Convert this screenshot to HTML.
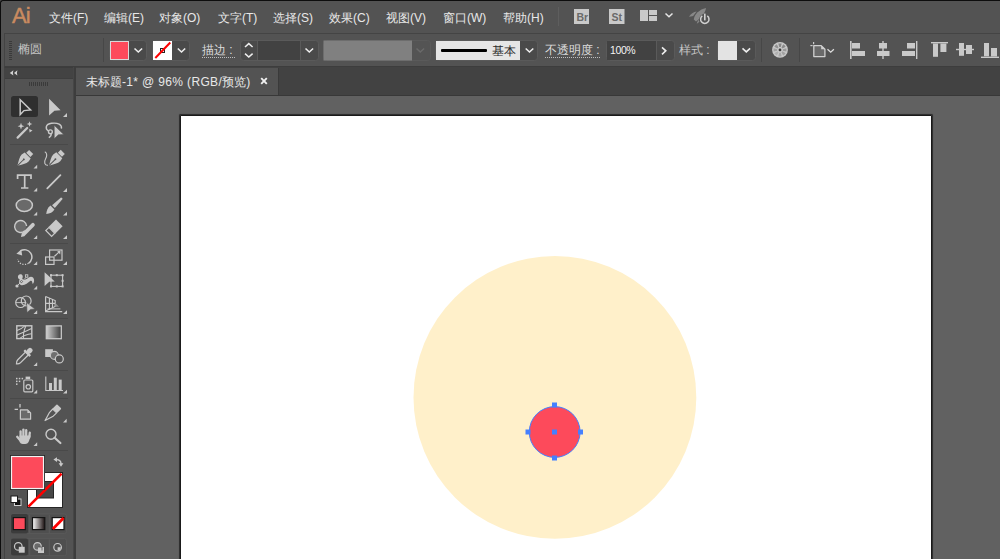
<!DOCTYPE html>
<html><head><meta charset="utf-8">
<style>
*{margin:0;padding:0;box-sizing:border-box}
html,body{width:1000px;height:559px;overflow:hidden;background:#535353;font-family:"Liberation Sans",sans-serif;color:#e6e6e6}
.abs{position:absolute}
#frame{position:absolute;left:0;top:0;width:1000px;height:559px;border-left:1px solid #0d0d0d;border-top:1px solid #0d0d0d;border-top-left-radius:3px}
.menu{position:absolute;top:10px;font-size:12px;line-height:16px;color:#e8e8e8;white-space:nowrap}
#ctrl{position:absolute;left:4px;top:33px;width:996px;height:34px;border-top:1px solid #444;border-left:1px solid #444;border-bottom:1px solid #3d3d3d;background:#535353}
#lpanel{position:absolute;left:4px;top:67px;width:72px;height:492px;border-left:1px solid #434343;border-top:1px solid #3c3c3c;background:#535353}
#lhead{position:absolute;left:0;top:0;width:68px;height:11px;background:#434343;border-bottom:1px solid #3e3e3e}
#ldiv{position:absolute;left:68px;top:-1px;width:3px;height:493px;background:linear-gradient(to right,#464646 1px,#3d3d3d 1px)}
#tabbar{position:absolute;left:76px;top:67px;width:924px;height:29px;background:#424242;border-bottom:1px solid #383838}
#tab{position:absolute;left:0;top:1px;width:203px;height:27px;background:#535353;border-right:1px solid #3a3a3a}
#canvas{position:absolute;left:76px;top:96px;width:924px;height:463px;background:#616161}
#artboard{position:absolute;left:180px;top:115px;width:752px;height:460px;background:#fff;border:1px solid #1a1a1a;border-radius:1px;box-shadow:0 0 0.8px 0.4px rgba(20,20,20,0.7)}
.ctext{position:absolute;font-size:12px;line-height:14px;color:#e0e0e0;white-space:nowrap}
.dd{position:absolute;background:#474747;border-radius:3px}
.sep{position:absolute;width:1px;background:#464646}
</style></head><body>
<div id="frame"></div>
<!-- menu bar -->
<div class="abs" style="left:12px;top:3px;font-size:22px;line-height:25px;color:#c98b60;letter-spacing:-1px;-webkit-text-stroke:0.45px #c98b60">Ai</div>
<div class="menu" style="left:49px">文件(F)</div>
<div class="menu" style="left:104px">编辑(E)</div>
<div class="menu" style="left:159px">对象(O)</div>
<div class="menu" style="left:218px">文字(T)</div>
<div class="menu" style="left:273px">选择(S)</div>
<div class="menu" style="left:329px">效果(C)</div>
<div class="menu" style="left:386px">视图(V)</div>
<div class="menu" style="left:443px">窗口(W)</div>
<div class="menu" style="left:503px">帮助(H)</div>

<div id="ctrl"></div>

<!-- control bar contents -->
<svg class="abs" style="left:0;top:0" width="1000" height="67">
<!-- menu separator -->
<rect x="558" y="7" width="1" height="19" fill="#5e5e5e"/>
<!-- Br / St -->
<rect x="574" y="9" width="15" height="15" fill="#c9c9c9"/>
<rect x="609" y="9" width="15.5" height="15" fill="#c9c9c9"/>
<!-- layout icon -->
<g fill="#c9c9c9">
<rect x="640" y="10" width="8" height="11"/>
<rect x="649" y="10" width="8" height="5"/>
<rect x="649" y="16" width="8" height="5"/>
</g>
<path d="M665.5 13.5 L669 16.8 L672.5 13.5" stroke="#e6e6e6" stroke-width="1.5" fill="none"/>
<!-- rocket -->
<g fill="#878787">
<path d="M693.8 19.6 C694 14.6 699.6 9.2 706 8 C705.4 13.2 700.4 18.4 696 21.4 Z"/>
<path d="M689 16.8 C690.6 13.8 693.6 11.6 696.6 11.4 L693.2 16 C691.6 16.2 690.2 16.6 689 16.8 Z"/>
<path d="M696.8 23.8 C697 22.2 697.6 21 698.8 20 L699.6 21.6 C698.8 22.6 697.8 23.4 696.8 23.8 Z"/>
</g>
<circle cx="704.8" cy="19.4" r="5.6" fill="#535353"/>
<path d="M702.3 15.9 A4.2 4.2 0 1 0 707.3 15.9" stroke="#d0d0d0" stroke-width="1.5" fill="none"/>
<rect x="704" y="13.6" width="1.6" height="6.8" fill="#d0d0d0"/>
<!-- grip -->
<g fill="#3a3a3a">
<rect x="9" y="41" width="3" height="1"/><rect x="9" y="43" width="3" height="1"/><rect x="9" y="45" width="3" height="1"/>
<rect x="9" y="47" width="3" height="1"/><rect x="9" y="49" width="3" height="1"/><rect x="9" y="51" width="3" height="1"/>
<rect x="9" y="53" width="3" height="1"/><rect x="9" y="55" width="3" height="1"/><rect x="9" y="57" width="3" height="1"/>
<rect x="9" y="59" width="3" height="1"/>
</g>
<!-- separators -->
<rect x="103" y="38" width="1" height="24" fill="#474747"/>
<rect x="761" y="38" width="1" height="24" fill="#474747"/>
<rect x="799" y="38" width="1" height="24" fill="#474747"/>

<!-- fill dropdown -->
<rect x="109.5" y="40.5" width="37" height="20" rx="3" fill="#4a4a4a" stroke="#5a5a5a" stroke-width="1"/>
<rect x="110.5" y="41.5" width="18" height="18" fill="#fd4a5b" stroke="#d9d9d9" stroke-width="1"/>
<path d="M134.5 48.5 L138.3 52 L142.1 48.5" stroke="#eeeeee" stroke-width="1.6" fill="none"/>
<!-- stroke dropdown -->
<rect x="152.5" y="40.5" width="37" height="20" rx="3" fill="#4a4a4a" stroke="#5a5a5a" stroke-width="1"/>
<rect x="153" y="41" width="19" height="19" fill="#ffffff"/>
<rect x="160.5" y="48.5" width="4" height="4" fill="none" stroke="#222" stroke-width="1"/>
<path d="M155.3 58 L170.3 42.5" stroke="#ff0000" stroke-width="2"/>
<path d="M177.8 48.5 L181.5 52 L185.2 48.5" stroke="#eeeeee" stroke-width="1.6" fill="none"/>
<!-- dotted underlines -->
<path d="M202 57.5 H235" stroke="#bdbdbd" stroke-width="1" stroke-dasharray="1 1"/>
<path d="M545 57.5 H601" stroke="#bdbdbd" stroke-width="1" stroke-dasharray="1 1"/>
<!-- stroke weight spinner -->
<rect x="240.5" y="40.5" width="78" height="20" rx="3" fill="#4a4a4a" stroke="#5a5a5a" stroke-width="1"/>
<rect x="258" y="41" width="42" height="19" fill="#424242"/>
<rect x="257" y="41" width="1" height="19" fill="#5a5a5a"/>
<rect x="300" y="41" width="1" height="19" fill="#5a5a5a"/>
<path d="M245 47 L248.8 43.6 L252.6 47" stroke="#eeeeee" stroke-width="1.5" fill="none"/>
<path d="M245 53.6 L248.8 57 L252.6 53.6" stroke="#eeeeee" stroke-width="1.5" fill="none"/>
<path d="M305.5 48.5 L309.3 52 L313.1 48.5" stroke="#eeeeee" stroke-width="1.6" fill="none"/>
<!-- disabled gray -->
<rect x="323.5" y="40.5" width="107" height="20" rx="3" fill="#545454" stroke="#5a5a5a" stroke-width="1"/>
<rect x="323.5" y="40.5" width="88.5" height="20" fill="#808080"/>
<path d="M416.5 48.5 L420.3 52 L424.1 48.5" stroke="#6a6a6a" stroke-width="1.5" fill="none"/>
<!-- stroke profile -->
<rect x="435.5" y="40.5" width="102" height="20" rx="3" fill="#4a4a4a" stroke="#5a5a5a" stroke-width="1"/>
<rect x="436" y="41" width="84" height="19" fill="#e5e5e5"/>
<rect x="441" y="49" width="46" height="3" rx="1" fill="#000"/>
<path d="M525.7 48.5 L529.5 52 L533.3 48.5" stroke="#eeeeee" stroke-width="1.6" fill="none"/>
<!-- opacity -->
<rect x="606.5" y="40.5" width="68" height="20" rx="3" fill="#4a4a4a" stroke="#5a5a5a" stroke-width="1"/>
<rect x="607" y="41" width="49" height="19" fill="#424242"/>
<rect x="656" y="41" width="1" height="19" fill="#5a5a5a"/>
<path d="M662 47.3 L665.8 50.8 L662 54.3" stroke="#eeeeee" stroke-width="1.6" fill="none"/>
<!-- style -->
<rect x="717.5" y="40.5" width="38" height="20" rx="3" fill="#4a4a4a" stroke="#5a5a5a" stroke-width="1"/>
<rect x="718" y="41" width="19" height="19" fill="#e3e3e3"/>
<path d="M742.5 48.3 L746.3 51.8 L750.1 48.3" stroke="#eeeeee" stroke-width="1.6" fill="none"/>
<!-- globe / recolor -->
<circle cx="780" cy="49.9" r="7.9" fill="#c8c8c8"/>
<path d="M779.25 47.10 L778.32 43.62 A6.5 6.5 0 0 1 781.68 43.62 L780.75 47.10 A2.9 2.9 0 0 0 779.25 47.10 Z" fill="#858585"/>
<path d="M781.45 47.39 L783.25 44.27 A6.5 6.5 0 0 1 785.63 46.65 L782.51 48.45 A2.9 2.9 0 0 0 781.45 47.39 Z" fill="#8a8a8a"/>
<path d="M782.80 49.15 L786.28 48.22 A6.5 6.5 0 0 1 786.28 51.58 L782.80 50.65 A2.9 2.9 0 0 0 782.80 49.15 Z" fill="#9a9a9a"/>
<path d="M782.51 51.35 L785.63 53.15 A6.5 6.5 0 0 1 783.25 55.53 L781.45 52.41 A2.9 2.9 0 0 0 782.51 51.35 Z" fill="#a2a2a2"/>
<path d="M780.75 52.70 L781.68 56.18 A6.5 6.5 0 0 1 778.32 56.18 L779.25 52.70 A2.9 2.9 0 0 0 780.75 52.70 Z" fill="#a8a8a8"/>
<path d="M778.55 52.41 L776.75 55.53 A6.5 6.5 0 0 1 774.37 53.15 L777.49 51.35 A2.9 2.9 0 0 0 778.55 52.41 Z" fill="#b0b0b0"/>
<path d="M777.20 50.65 L773.72 51.58 A6.5 6.5 0 0 1 773.72 48.22 L777.20 49.15 A2.9 2.9 0 0 0 777.20 50.65 Z" fill="#a0a0a0"/>
<path d="M777.49 48.45 L774.37 46.65 A6.5 6.5 0 0 1 776.75 44.27 L778.55 47.39 A2.9 2.9 0 0 0 777.49 48.45 Z" fill="#909090"/>
<circle cx="780" cy="49.9" r="1.4" fill="#3c3c3c"/>
<!-- artboard/transform icon -->
<g fill="#cccccc"><rect x="813" y="42" width="1.2" height="2.2"/><rect x="810.4" y="45" width="2.2" height="1.2"/></g>
<path d="M813.8 45.6 H821.2 L824.9 49.3 V56.6 H813.8 Z" fill="#6a6a6a" stroke="#d0d0d0" stroke-width="1.3" stroke-linejoin="round"/>
<path d="M821.2 45.6 L824.9 49.3 H821.2 Z" fill="#d0d0d0"/>
<path d="M827.5 49.3 L830.7 52.2 L833.9 49.3" stroke="#dddddd" stroke-width="1.3" fill="none"/>
<!-- align icons -->
<g fill="#c9c9c9">
<rect x="850" y="41" width="1.6" height="18"/><rect x="852" y="43" width="8" height="5.5"/><rect x="852" y="51" width="13" height="5"/>
<rect x="882.3" y="41" width="1.4" height="18"/><rect x="879" y="43" width="8" height="5.5"/><rect x="877" y="51" width="12.5" height="5"/>
<rect x="916" y="41" width="1.4" height="18"/><rect x="907" y="43" width="8" height="5.5"/><rect x="902" y="51" width="13" height="5"/>
<rect x="931" y="42" width="17" height="1.4"/><rect x="933" y="43.5" width="5" height="13.3"/><rect x="940.4" y="43.5" width="6" height="8.5"/>
<rect x="956" y="48.8" width="18" height="1.4"/><rect x="959" y="43" width="5" height="12.8"/><rect x="966" y="45" width="6" height="9"/>
<rect x="981" y="56.6" width="18" height="1.4"/><rect x="984" y="43" width="5" height="13.3"/><rect x="991" y="48" width="6" height="8.5"/>
</g>
</svg>
<div class="abs" style="left:576.5px;top:10.5px;font-size:10.5px;line-height:13px;font-weight:bold;color:#6a6a6a">Br</div>
<div class="abs" style="left:611.5px;top:10.5px;font-size:10.5px;line-height:13px;font-weight:bold;color:#6a6a6a">St</div>
<div class="ctext" style="left:18px;top:42px;color:#c4c4c4">椭圆</div>
<div class="ctext" style="left:202px;top:43px;color:#dcdcdc">描边 :</div>
<div class="ctext" style="left:492px;top:44px;color:#2a2a2a">基本</div>
<div class="ctext" style="left:545px;top:43px;color:#dcdcdc">不透明度 :</div>
<div class="ctext" style="left:610px;top:42.5px;color:#f4f4f4;font-size:10.5px;letter-spacing:-0.4px">100%</div>
<div class="ctext" style="left:679px;top:43px;color:#c6c6c6">样式 :</div>

<div id="lpanel"><div id="lhead"></div><div id="ldiv"></div></div>

<!-- tools panel -->
<svg class="abs" style="left:0;top:0" width="76" height="559">
<defs>
<linearGradient id="gtool" x1="0" x2="1" y1="0" y2="0"><stop offset="0" stop-color="#d0d0d0"/><stop offset="1" stop-color="#3c3c3c"/></linearGradient>
<linearGradient id="gsw" x1="0" x2="1" y1="0" y2="0"><stop offset="0" stop-color="#ffffff"/><stop offset="1" stop-color="#1a1010"/></linearGradient>
</defs>
<!-- header chevrons -->
<path d="M9.8 72.9 L13.4 70.2 Q12.4 72.9 13.4 75.6 Z M14 72.9 L17.4 70.2 Q16.4 72.9 17.4 75.6 Z" fill="#d4d4d4"/>
<!-- grip -->
<g fill="#3a3a3a">
<rect x="29" y="82" width="1" height="4"/><rect x="31" y="82" width="1" height="4"/><rect x="33" y="82" width="1" height="4"/><rect x="35" y="82" width="1" height="4"/>
<rect x="37" y="82" width="1" height="4"/><rect x="39" y="82" width="1" height="4"/><rect x="41" y="82" width="1" height="4"/><rect x="43" y="82" width="1" height="4"/>
<rect x="45" y="82" width="1" height="4"/><rect x="47" y="82" width="1" height="4"/>
</g>
<!-- separators -->
<g fill="#494949">
<rect x="10" y="144" width="58" height="1"/>
<rect x="10" y="243" width="58" height="1"/>
<rect x="10" y="318" width="58" height="1"/>
<rect x="10" y="370" width="58" height="1"/>
<rect x="10" y="398" width="58" height="1"/>
<rect x="10" y="450" width="58" height="1"/>
</g>
<!-- selected bg -->
<rect x="11" y="96" width="27" height="21" rx="2.5" fill="#2f2f2f"/>
<g fill="#c9c9c9" stroke="none">
<!-- corner triangles -->
<path d="M63 117 H67 V113 Z"/>
<path d="M33.5 168.5 H37.2 V164.8 Z"/><path d="M33.5 191.5 H37.2 V187.8 Z"/><path d="M63 192 H67 V188 Z"/>
<path d="M33.5 215.5 H37.2 V211.8 Z"/><path d="M63 215.5 H67 V211.8 Z"/>
<path d="M33.5 239 H37.2 V235.3 Z"/><path d="M63 239 H67 V235.3 Z"/>
<path d="M33.5 265 H37.2 V261.3 Z"/><path d="M63 265 H67 V261.3 Z"/>
<path d="M33.5 289.5 H37.2 V285.8 Z"/>
<path d="M33.5 314 H37.2 V310.3 Z"/><path d="M63 314 H67 V310.3 Z"/>
<path d="M33.5 366 H37.2 V362.3 Z"/>
<path d="M33.5 393.5 H37.2 V389.8 Z"/><path d="M63 393.5 H67 V389.8 Z"/>
<path d="M63 422.5 H66.7 V418.8 Z"/>
<path d="M33.5 446 H37.2 V442.3 Z"/>
</g>
<!-- selection (outline) -->
<path d="M20.2 99.8 L30.6 110 L24 110.6 L20.2 114.6 Z" fill="#2f2f2f" stroke="#c9c9c9" stroke-width="1.5" stroke-linejoin="miter"/>
<!-- direct selection -->
<path d="M49.1 98.7 L60.6 110.3 L54.4 110.8 L49.1 115.5 Z" fill="#c9c9c9"/>
<!-- magic wand -->
<path d="M17.6 137.6 L27.2 128" stroke="#c9c9c9" stroke-width="2.2" stroke-linecap="round"/>
<path d="M21 122.8 L21.9 125.3 L24.4 126.2 L21.9 127.1 L21 129.6 L20.1 127.1 L17.6 126.2 L20.1 125.3 Z" fill="#c9c9c9"/>
<path d="M29.5 121.2 L30.3 123.2 L32.3 124 L30.3 124.8 L29.5 126.8 L28.7 124.8 L26.7 124 L28.7 123.2 Z" fill="#c9c9c9"/>
<path d="M29.2 129 L32.5 130.6 L29.6 132.4 Z" fill="#c9c9c9"/>
<!-- lasso -->
<path d="M48.6 131.2 C45 129 45.2 124.2 51.5 123.3 C57.8 122.4 62.2 124.6 61.4 128.6" fill="none" stroke="#c9c9c9" stroke-width="1.4"/>
<circle cx="50.4" cy="131.8" r="1.9" fill="none" stroke="#c9c9c9" stroke-width="1.4"/>
<path d="M51.2 133.6 C51.4 135.2 50.6 136.6 48.8 137.6" fill="none" stroke="#c9c9c9" stroke-width="1.4"/>
<path d="M54.2 125.2 L63.8 134.6 L58.4 134.8 L54.2 138.8 Z" fill="#c9c9c9" stroke="#535353" stroke-width="0.6"/>
<!-- pen -->
<g transform="translate(24.2,159) rotate(45) scale(0.88)">
<rect x="-3.3" y="-11.2" width="6.6" height="4.6" fill="#c9c9c9"/>
<path d="M-4.8 -5.6 H4.8 L5.6 -1.5 C5.6 2 2.5 6.5 0 11 C-2.5 6.5 -5.6 2 -5.6 -1.5 Z" fill="#c9c9c9"/>
<path d="M0 1.2 V11" stroke="#535353" stroke-width="1.1"/>
<circle cx="0" cy="0.6" r="1.1" fill="#535353"/>
</g>
<!-- curvature pen -->
<g transform="translate(55.8,158.8) rotate(45) scale(0.88)">
<rect x="-3.3" y="-11.2" width="6.6" height="4.6" fill="#c9c9c9"/>
<path d="M-4.8 -5.6 H4.8 L5.6 -1.5 C5.6 2 2.5 6.5 0 11 C-2.5 6.5 -5.6 2 -5.6 -1.5 Z" fill="#c9c9c9"/>
<path d="M0 1.2 V11" stroke="#535353" stroke-width="1.1"/>
<circle cx="0" cy="0.6" r="1.1" fill="#535353"/>
</g>
<path d="M44.8 151.8 C47.5 153 47 156.5 45.5 159 C43.8 162 44.5 165.5 48 165.2" fill="none" stroke="#c9c9c9" stroke-width="1.1"/>
<!-- type -->
<path d="M17.6 179 V175.2 H31 V179 M24.7 175.5 V188 M21 188 H28.4" fill="none" stroke="#c9c9c9" stroke-width="1.7"/>
<!-- line -->
<path d="M47.3 188.3 L60.4 175.2" stroke="#c9c9c9" stroke-width="1.8" stroke-linecap="round"/>
<!-- ellipse -->
<ellipse cx="24.3" cy="205.2" rx="8.1" ry="6.3" fill="#6a6a6a" stroke="#c9c9c9" stroke-width="1.5"/>
<!-- paintbrush -->
<g transform="translate(52.6,207.4) rotate(45)">
<path d="M-1.1 -13 Q0 -14 1.1 -13 L2 -1.2 H-2 Z" fill="#c9c9c9"/>
<path d="M-2.8 0.2 H2.8 C3.6 3 2.6 6.5 0.2 9.2 C-1.6 7 -3.5 3.5 -2.8 0.2 Z" fill="#c9c9c9"/>
</g>
<!-- shaper -->
<path d="M24.8 230.8 A6 6 0 1 1 26.6 226" fill="#6a6a6a" stroke="#c9c9c9" stroke-width="1.4"/>
<path d="M33.2 222.8 C34.8 223.6 35.2 225 34.4 226 L24.3 236.2 L21 236.9 L21.7 233.6 L31.8 223.3 C32.2 222.9 32.7 222.6 33.2 222.8 Z" fill="#c9c9c9"/>
<!-- eraser -->
<g transform="translate(53.8,228.4) rotate(45)">
<rect x="-4.7" y="-7.8" width="9.4" height="10.6" fill="#c9c9c9"/>
<rect x="-4.1" y="2.8" width="8.2" height="4.4" fill="#535353" stroke="#c9c9c9" stroke-width="1.2"/>
</g>
<!-- rotate -->
<path d="M20.5 250.9 A7.3 7.3 0 1 1 28.5 263.3" fill="none" stroke="#c9c9c9" stroke-width="1.5"/>
<path d="M28.5 263.3 A7.3 7.3 0 0 1 17.6 259.5" fill="none" stroke="#c9c9c9" stroke-width="1.3" stroke-dasharray="1.2 1.4"/>
<path d="M16.4 253.8 L21.2 249.4 L22.2 255.4 Z" fill="#c9c9c9"/>
<!-- scale -->
<rect x="49.6" y="250" width="12.4" height="10.2" fill="none" stroke="#c9c9c9" stroke-width="1.2"/>
<rect x="45.6" y="257" width="8.4" height="7.4" fill="none" stroke="#c9c9c9" stroke-width="1.2"/>
<path d="M54.5 256.2 L59.5 251.6" stroke="#c9c9c9" stroke-width="1.2"/>
<path d="M60.5 250.8 L60.2 254.5 L57.2 251.2 Z" fill="#c9c9c9"/>
<!-- puppet warp -->
<path d="M18 277.8 C17.4 275.2 19.8 273.4 22 274.8 C23.2 275.8 22.8 277.6 22.2 279 C24 280.8 26.8 279.2 28.8 277.6 C31.4 275.8 34.2 277.4 34.1 280.8 C34 282.8 33.2 284 32.4 283.6 C32.4 281.4 31.6 280.2 30.2 281 C28 282.8 25 285.6 21.4 285.2 C18.6 284.8 18.6 281.4 19.8 279.6 C19 279.2 18.2 278.6 18 277.8 Z" fill="#c9c9c9"/>
<path d="M17 285.9 L21 282" stroke="#c9c9c9" stroke-width="1"/>
<circle cx="17" cy="286" r="1.6" fill="#c9c9c9"/>
<circle cx="21.4" cy="281.6" r="1.7" fill="#535353" stroke="#c9c9c9" stroke-width="0.9"/>
<circle cx="21.4" cy="281.6" r="0.7" fill="#e0e0e0"/>
<rect x="25.4" y="274.8" width="2.4" height="2.4" fill="#535353" stroke="#c9c9c9" stroke-width="0.9"/>
<path d="M24 279.5 L26 277.5" stroke="#c9c9c9" stroke-width="0.9"/>
<!-- free transform -->
<rect x="51" y="275.2" width="11.6" height="11.2" fill="none" stroke="#c9c9c9" stroke-width="1.1"/>
<g fill="#c9c9c9"><rect x="50" y="274.2" width="2" height="2"/><rect x="55.8" y="274.2" width="2" height="2"/><rect x="61.6" y="274.2" width="2" height="2"/><rect x="61.6" y="279.8" width="2" height="2"/><rect x="61.6" y="285.4" width="2" height="2"/><rect x="55.8" y="285.4" width="2" height="2"/><rect x="50" y="285.4" width="2" height="2"/></g>
<path d="M44.6 272.2 L54.8 281.6 L49.3 281.8 L44.6 286 Z" fill="#c9c9c9"/>
<!-- shape builder -->
<circle cx="20.6" cy="302.6" r="4.9" fill="none" stroke="#c9c9c9" stroke-width="1.2"/>
<circle cx="26.2" cy="300.9" r="4.9" fill="none" stroke="#c9c9c9" stroke-width="1.2"/>
<path d="M16 302.6 H26.5" stroke="#c9c9c9" stroke-width="0.9"/>
<path d="M26.6 302.6 L35 309 L30.6 309.4 L27 312.6 Z" fill="#c9c9c9" stroke="#535353" stroke-width="0.6"/>
<!-- perspective grid -->
<path d="M45.6 296.4 V311.6 H62.2" fill="none" stroke="#c9c9c9" stroke-width="1.2"/>
<path d="M45.6 296.4 L55.2 300.6 V306.4 L45.6 311 M49.4 298 V309.6 M52.5 299.3 V308 M45.6 303.4 H55.2" fill="none" stroke="#c9c9c9" stroke-width="1.1"/>
<path d="M47.5 308.9 H60.4" stroke="#c9c9c9" stroke-width="1"/>
<path d="M55.4 303 L59 306.8 H55.4 Z" fill="#8c8c8c"/>
<!-- mesh -->
<rect x="16.8" y="325.8" width="15" height="12.8" fill="none" stroke="#c9c9c9" stroke-width="1.4"/>
<path d="M25.8 326 C24 330 23 334 23.6 338.6 M17 330.4 C20 329.4 23 327.8 24.6 326 M17 335 C21 333 26 331 31.6 328.6 M19.6 338.6 C23 336 27 334.2 31.6 333.8" fill="none" stroke="#c9c9c9" stroke-width="1.1"/>
<!-- gradient tool -->
<rect x="46.3" y="325.9" width="15" height="12.8" fill="url(#gtool)" stroke="#c9c9c9" stroke-width="1.3"/>
<!-- eyedropper -->
<g transform="translate(24,356.4) rotate(45)">
<path d="M-2 -4 V6.8 C-2 8.6 -1 9.8 0 10.6 C1 9.8 2 8.6 2 6.8 V-4" fill="none" stroke="#c9c9c9" stroke-width="1.3"/>
<rect x="-4.2" y="-5.8" width="8.4" height="2.4" rx="0.6" fill="#c9c9c9"/>
<rect x="-2.5" y="-11" width="5" height="6" rx="2.2" fill="#c9c9c9"/>
</g>
<!-- blend -->
<rect x="45.2" y="349.2" width="7.7" height="7.8" fill="#c9c9c9"/>
<circle cx="54.4" cy="355.4" r="4" fill="#707070" stroke="#c9c9c9" stroke-width="1.1"/>
<circle cx="59.3" cy="358.9" r="4" fill="#535353" stroke="#c9c9c9" stroke-width="1.2"/>
<!-- symbol sprayer -->
<g fill="#c9c9c9">
<rect x="16" y="377.8" width="1.5" height="1.5"/><rect x="18.8" y="377.8" width="1.5" height="1.5"/><rect x="21.6" y="377.8" width="1.5" height="1.5"/>
<rect x="16" y="380.6" width="1.5" height="1.5"/><rect x="18.8" y="380.6" width="1.5" height="1.5"/>
<rect x="16" y="383.4" width="1.5" height="1.5"/>
<rect x="25.6" y="376.6" width="4.6" height="2.6"/>
</g>
<rect x="23.8" y="380" width="9" height="11.8" rx="1" fill="none" stroke="#c9c9c9" stroke-width="1.2"/>
<circle cx="28.3" cy="386.8" r="2.2" fill="none" stroke="#c9c9c9" stroke-width="1.2"/>
<!-- column graph -->
<path d="M45.8 376.5 V390.5 H63" fill="none" stroke="#c9c9c9" stroke-width="1.1"/>
<g fill="#c9c9c9"><rect x="49" y="383" width="3" height="7"/><rect x="53.8" y="377.7" width="3" height="12.3"/><rect x="58.7" y="379.6" width="3" height="10.4"/></g>
<!-- artboard -->
<path d="M20 404 V407.6 M14.6 409.4 H18" stroke="#c9c9c9" stroke-width="1.3"/>
<path d="M20.4 409.9 H27.6 L30.6 412.9 V419.2 H20.4 Z" fill="#6a6a6a" stroke="#c9c9c9" stroke-width="1.2" stroke-linejoin="round"/>
<path d="M27.4 409.9 L30.6 413.1 H27.4 Z" fill="#c9c9c9"/>
<!-- slice/knife -->
<g transform="translate(54.4,411.2) rotate(45)">
<rect x="-3.2" y="-6.8" width="6.4" height="6.2" rx="0.8" fill="#c9c9c9"/>
<path d="M-2.7 -0.4 L2.7 -0.4 L2.6 5 L0 13.2 L-2.6 4.2 Z" fill="none" stroke="#c9c9c9" stroke-width="1.2" stroke-linejoin="round"/>
</g>
<!-- hand -->
<g stroke="#c9c9c9" stroke-width="2.3" stroke-linecap="round" fill="none">
<path d="M20.6 437 V431.4"/><path d="M23.4 437 V429.6"/><path d="M26.2 437 V430.2"/><path d="M29.2 437.6 L29.8 432.6"/>
<path d="M17.2 436.8 L20.4 440.6"/>
</g>
<path d="M19.5 435.5 H30.8 L29 441 Q28 443.9 25.2 443.9 H22.6 Q20.6 443.9 19.6 442 Z" fill="#c9c9c9"/>
<!-- zoom -->
<circle cx="51" cy="434.2" r="5" fill="none" stroke="#c9c9c9" stroke-width="1.4"/>
<path d="M54.6 437.8 L60.4 443" stroke="#c9c9c9" stroke-width="2.2" stroke-linecap="round"/>

<!-- swatches -->
<path d="M56.4 459.6 Q61 459.6 61 464" fill="none" stroke="#c9c9c9" stroke-width="1.4"/>
<path d="M53.4 459.6 L57 457.2 V462 Z M61 466.8 L58.6 463.2 H63.4 Z" fill="#c9c9c9"/>
<!-- stroke big -->
<rect x="27.5" y="472.5" width="35" height="35" fill="#ffffff" stroke="#262626" stroke-width="1"/>
<rect x="36.5" y="481.5" width="17" height="16.5" fill="#474747" stroke="#262626" stroke-width="1"/>
<path d="M28.4 506.6 L61.6 473.6" stroke="#ff0000" stroke-width="2.6"/>
<!-- fill big -->
<rect x="10.5" y="455.5" width="34" height="34" fill="#fd4a5b" stroke="#262626" stroke-width="1"/>
<rect x="11.5" y="456.5" width="32" height="32" fill="none" stroke="#f2f2f2" stroke-width="1.2"/>
<!-- default -->
<rect x="14.5" y="499" width="6.5" height="6.5" fill="#111" stroke="#d0d0d0" stroke-width="1"/>
<rect x="11" y="496" width="6.5" height="6.5" fill="#fff" stroke="#1a1a1a" stroke-width="1"/>
<!-- mode row -->
<rect x="11" y="514" width="55.5" height="19.5" rx="2" fill="#4f4f4f" stroke="#5b5b5b" stroke-width="0.8"/>
<rect x="11" y="514" width="17" height="19.5" rx="2" fill="#3c3c3c"/>
<rect x="29.2" y="515" width="1" height="18" fill="#5b5b5b"/><rect x="48.8" y="515" width="1" height="18" fill="#5b5b5b"/>
<rect x="13.3" y="517.6" width="12" height="12" fill="#fd4a5b" stroke="#141414" stroke-width="1.2"/>
<rect x="32.5" y="517.6" width="12.3" height="12" fill="url(#gsw)" stroke="#141414" stroke-width="1.2"/>
<rect x="52.2" y="517.6" width="11.8" height="12" fill="#ffffff" stroke="#141414" stroke-width="1.2"/>
<path d="M52.8 529 L63.6 518" stroke="#ff0000" stroke-width="2.8"/>
<!-- draw mode row -->
<rect x="11" y="538.6" width="55.5" height="17" rx="2" fill="#4f4f4f" stroke="#5b5b5b" stroke-width="0.8"/>
<rect x="11" y="538.6" width="17" height="17" rx="2" fill="#3c3c3c"/>
<rect x="29.2" y="539.5" width="1" height="16" fill="#5b5b5b"/><rect x="48.8" y="539.5" width="1" height="16" fill="#5b5b5b"/>
<circle cx="18.3" cy="546.4" r="3.8" fill="none" stroke="#c9c9c9" stroke-width="1.2"/>
<rect x="18.8" y="546.8" width="5.9" height="5.9" fill="#c9c9c9"/>
<circle cx="37.5" cy="546.4" r="3.8" fill="#6a6a6a" stroke="#c9c9c9" stroke-width="1.2"/>
<rect x="38" y="547" width="6" height="6" fill="#c9c9c9"/>
<path d="M38 547 H42 V550.5" fill="none" stroke="#535353" stroke-width="0.8"/>
<circle cx="57.6" cy="547.3" r="3.8" fill="none" stroke="#c9c9c9" stroke-width="1.2"/>
<path d="M57.6 547.3 H60.8 A3.4 3.4 0 0 1 57.6 550.6 Z" fill="#c9c9c9"/>
</svg>

<div id="tabbar"><div id="tab"></div></div>
<div class="ctext" style="left:86px;top:75px;font-size:12px;color:#e8e8e8">未标题<span style="letter-spacing:0.35px">-1* @ 96% (RGB/</span>预览)</div>
<svg class="abs" style="left:258px;top:75px" width="12" height="12"><path d="M3.2 3.2 L8.8 8.8 M8.8 3.2 L3.2 8.8" stroke="#f0f0f0" stroke-width="1.9"/></svg>
<div id="canvas"></div>
<div id="artboard"></div>
<svg class="abs" style="left:0;top:0" width="1000" height="559">
<circle cx="554.9" cy="397.4" r="141.4" fill="#fff0ca"/>
<circle cx="554.7" cy="432" r="25.4" fill="#fd4a5b" stroke="#4580ff" stroke-width="1"/>
<g fill="#4580ff">
<rect x="552" y="402.5" width="5" height="5"/>
<rect x="552" y="429.5" width="5" height="5"/>
<rect x="552" y="455.5" width="5" height="5"/>
<rect x="525.5" y="429.5" width="5" height="5"/>
<rect x="578" y="429.5" width="5" height="5"/>
</g>
</svg>
</body></html>
